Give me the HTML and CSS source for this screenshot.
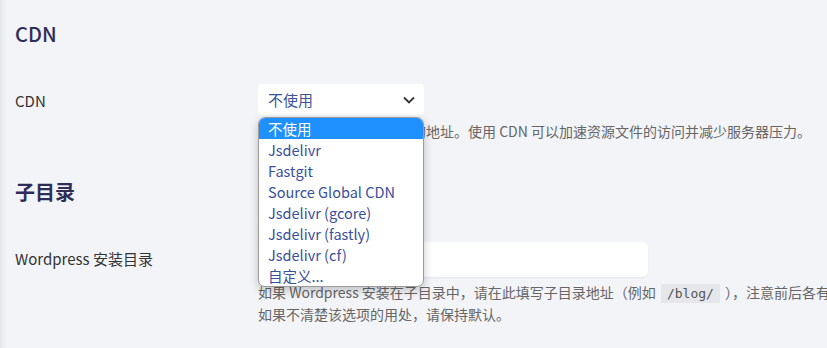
FILE: index.html
```html
<!DOCTYPE html>
<html lang="zh-CN">
<head>
  <meta charset="UTF-8">
  <meta name="viewport" content="width=device-width, initial-scale=1.0">
  <title>设置</title>
  <link rel="stylesheet" href="styles.css">
</head>
<body>
  <div class="page">

    <h2 class="section-title">CDN</h2>
    <div class="field">
      <div class="field-label">CDN</div>
      <div class="field-control">
        <div class="select-wrap">
          <div class="select">
            <span>不使用</span>
            <svg class="chevron" width="12" height="8" viewBox="0 0 12 8"><path d="M1 1.5 L6 6.5 L11 1.5" fill="none" stroke="#333" stroke-width="1.8"/></svg>
          </div>
          <ul class="options">
            <li class="selected">不使用</li>
            <li>Jsdelivr</li>
            <li>Fastgit</li>
            <li>Source Global CDN</li>
            <li>Jsdelivr (gcore)</li>
            <li>Jsdelivr (fastly)</li>
            <li>Jsdelivr (cf)</li>
            <li>自定义...</li>
          </ul>
        </div>
        <p class="field-desc">选择静态资源文件所使用的地址。使用 CDN 可以加速资源文件的访问并减少服务器压力。</p>
      </div>
    </div>

    <h2 class="section-title bold">子目录</h2>
    <div class="field">
      <div class="field-label">Wordpress 安装目录</div>
      <div class="field-control">
        <input class="text-input" type="text">
        <p class="field-desc">如果 Wordpress 安装在子目录中，请在此填写子目录地址（例如 <code>/blog/</code> ），注意前后各有一个斜杠。<br>如果不清楚该选项的用处，请保持默认。</p>
      </div>
    </div>

  </div>
</body>
</html>
```

FILE: styles.css
```css
html, body {
  margin: 0;
  padding: 0;
  overflow: hidden;
}

body {
  font-family: "Noto Sans CJK SC", "Noto Sans", sans-serif;
  background-color: #f3f4f7;
  color: #333;
  width: 827px;
  height: 348px;
}

.page {
  height: 100%;
  padding-left: 15px;
  box-sizing: border-box;
  box-shadow: inset 7px 0 6px -5px rgba(0, 0, 0, 0.08);
}

.section-title {
  margin: 0;
  padding-top: 20px;
  font-size: 20px;
  line-height: 28px;
  font-weight: 500;
  color: #2e2d5a;
}

.section-title.bold {
  padding-top: 37px;
  font-weight: 700;
}

.field {
  display: flex;
  margin-top: 36px;
}

.field-label {
  width: 243px;
  flex-shrink: 0;
  font-size: 15px;
  line-height: 34px;
  color: #333;
}

.field-control {
  flex: 1;
  min-width: 0;
}

.select-wrap {
  position: relative;
  width: 166px;
}

.select {
  display: flex;
  align-items: center;
  justify-content: space-between;
  height: 31px;
  padding: 0 9px 0 10px;
  background-color: #fff;
  border-radius: 4px;
  font-size: 15px;
  color: #3a5597;
  box-sizing: border-box;
}

.chevron {
  margin-top: 1px;
}

.options {
  position: absolute;
  top: 33px;
  left: 0;
  width: 166px;
  margin: 0;
  padding: 0;
  list-style: none;
  background-color: #fff;
  border: 1px solid #9c9c9c;
  border-radius: 7px;
  box-shadow: 0 3px 10px rgba(0, 0, 0, 0.22);
  box-sizing: border-box;
  overflow: hidden;
  z-index: 10;
}

.options li {
  height: 21px;
  line-height: 21px;
  padding-left: 9px;
  font-size: 14.5px;
  color: #3a4f9d;
  white-space: nowrap;
}

.options li.selected {
  background-color: #1e90ff;
  color: #fff;
}

.field-desc {
  margin: 6px 0 0;
  font-size: 14px;
  line-height: 20px;
  color: #666;
  white-space: nowrap;
  overflow: hidden;
}

.text-input {
  display: block;
  width: 386px;
  height: 33px;
  margin: 0;
  border: none;
  border-radius: 6px;
  background-color: #fff;
  box-shadow: 0 1px 2px rgba(0, 0, 0, 0.06);
  outline: none;
}

.text-input + .field-desc {
  margin-top: 5px;
}

code {
  font-family: "DejaVu Sans Mono", "Liberation Mono", monospace;
  font-size: 13px;
  background-color: #e6e7ea;
  padding: 2px 6px;
  margin: 0 2px;
  color: #555;
}
```
